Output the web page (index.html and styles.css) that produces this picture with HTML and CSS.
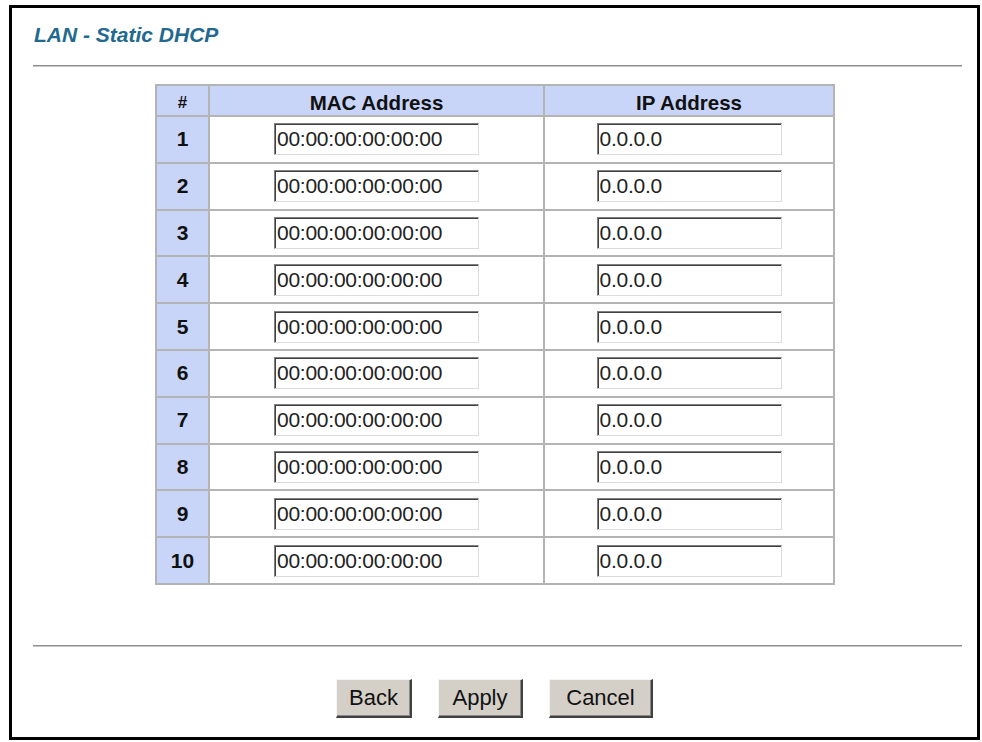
FILE: index.html
```html
<!DOCTYPE html>
<html>
<head>
<meta charset="utf-8">
<link rel="stylesheet" href="styles.css">
</head>
<body>
<div class="frame">
  <div class="title">LAN - Static DHCP</div>
  <div class="rule rule-top"></div>
  <div class="grid">
    <div class="cell hdr num">#</div>
    <div class="cell hdr">MAC Address</div>
    <div class="cell hdr">IP Address</div>

    <div class="cell num">1</div>
    <div class="cell"><input class="mac" type="text" value="00:00:00:00:00:00"></div>
    <div class="cell"><input class="ip" type="text" value="0.0.0.0"></div>

    <div class="cell num">2</div>
    <div class="cell"><input class="mac" type="text" value="00:00:00:00:00:00"></div>
    <div class="cell"><input class="ip" type="text" value="0.0.0.0"></div>

    <div class="cell num">3</div>
    <div class="cell"><input class="mac" type="text" value="00:00:00:00:00:00"></div>
    <div class="cell"><input class="ip" type="text" value="0.0.0.0"></div>

    <div class="cell num">4</div>
    <div class="cell"><input class="mac" type="text" value="00:00:00:00:00:00"></div>
    <div class="cell"><input class="ip" type="text" value="0.0.0.0"></div>

    <div class="cell num">5</div>
    <div class="cell"><input class="mac" type="text" value="00:00:00:00:00:00"></div>
    <div class="cell"><input class="ip" type="text" value="0.0.0.0"></div>

    <div class="cell num">6</div>
    <div class="cell"><input class="mac" type="text" value="00:00:00:00:00:00"></div>
    <div class="cell"><input class="ip" type="text" value="0.0.0.0"></div>

    <div class="cell num">7</div>
    <div class="cell"><input class="mac" type="text" value="00:00:00:00:00:00"></div>
    <div class="cell"><input class="ip" type="text" value="0.0.0.0"></div>

    <div class="cell num">8</div>
    <div class="cell"><input class="mac" type="text" value="00:00:00:00:00:00"></div>
    <div class="cell"><input class="ip" type="text" value="0.0.0.0"></div>

    <div class="cell num">9</div>
    <div class="cell"><input class="mac" type="text" value="00:00:00:00:00:00"></div>
    <div class="cell"><input class="ip" type="text" value="0.0.0.0"></div>

    <div class="cell num">10</div>
    <div class="cell"><input class="mac" type="text" value="00:00:00:00:00:00"></div>
    <div class="cell"><input class="ip" type="text" value="0.0.0.0"></div>
  </div>
  <div class="rule rule-bottom"></div>
  <div class="buttons">
    <button class="btn btn-back" type="button">Back</button>
    <button class="btn btn-apply" type="button">Apply</button>
    <button class="btn btn-cancel" type="button">Cancel</button>
  </div>
</div>
</body>
</html>
```

FILE: styles.css
```css
html, body {
  margin: 0;
  padding: 0;
  background: #ffffff;
}

body {
  font-family: "Liberation Sans", Arial, sans-serif;
}

.frame {
  margin: 5px 0 0 9px;
  width: 965px;
  height: 729px;
  border: 3px solid #000000;
  background: #ffffff;
}

.title {
  margin: 15px 0 0 22px;
  font-size: 21px;
  line-height: 24px;
  font-weight: bold;
  font-style: italic;
  color: #22698f;
}

.rule {
  margin-left: 21px;
  width: 929px;
  height: 0;
  border-top: 1px solid #8e8e8e;
  border-bottom: 1px solid #c8c8c8;
}

.rule-top {
  margin-top: 18px;
}

.grid {
  margin: 17px 0 0 143px;
  width: 680px;
  box-sizing: border-box;
  display: grid;
  grid-template-columns: 53px 335px 290px;
  grid-template-rows: 31px;
  grid-auto-rows: 46.8px;
  border-top: 2px solid #b4b4b4;
  border-left: 2px solid #b4b4b4;
}

.cell {
  box-sizing: border-box;
  border-right: 2px solid #b4b4b4;
  border-bottom: 2px solid #b4b4b4;
  display: flex;
  align-items: center;
  justify-content: center;
  background: #ffffff;
}

.hdr {
  background: #c8d5f9;
  font-weight: bold;
  font-size: 20.5px;
  color: #111111;
  padding-top: 4px;
}

.hdr.num {
  font-size: 17px;
}

.num {
  background: #c8d5f9;
  font-weight: bold;
  font-size: 21px;
  color: #111111;
}

input {
  box-sizing: border-box;
  height: 32px;
  margin: 0;
  padding: 0 0 0 2px;
  font-family: "Liberation Sans", Arial, sans-serif;
  font-size: 21px;
  letter-spacing: -0.25px;
  color: #222222;
  background: #ffffff;
  border-style: solid;
  border-width: 1px;
  border-color: #808080 #dcdcdc #dcdcdc #808080;
  box-shadow: inset 1px 1px 0 #404040;
  outline: none;
}

.mac {
  width: 205px;
}

.ip {
  width: 185px;
}

.rule-bottom {
  margin-top: 60px;
}

.buttons {
  margin-top: 32px;
  display: flex;
  justify-content: center;
  gap: 26px;
}

.btn {
  box-sizing: border-box;
  height: 39px;
  padding: 0;
  margin: 0;
  font-family: "Liberation Sans", Arial, sans-serif;
  font-size: 22px;
  color: #111111;
  background: #d4d0c8;
  border-style: solid;
  border-width: 1px 2px 2px 1px;
  border-color: #f4f4f4 #404040 #404040 #f4f4f4;
  box-shadow: inset -1px -1px 0 #8a8a8a;
}

.btn-back {
  width: 76px;
}

.btn-apply {
  width: 85px;
}

.btn-cancel {
  width: 104px;
}
```
